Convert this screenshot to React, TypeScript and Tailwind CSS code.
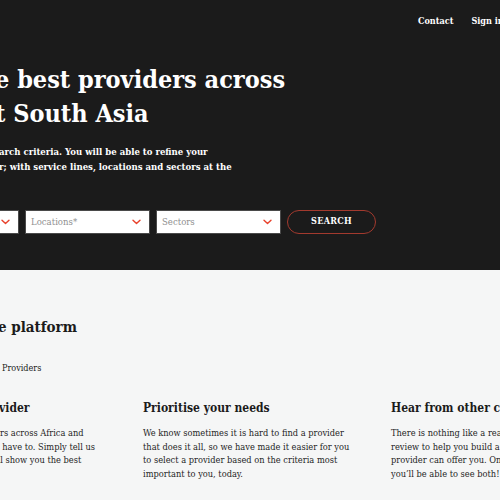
const SERIF = { fontFamily: '"DejaVu Serif Condensed", "DejaVu Serif", serif' };

function Chevron() {
  return (
    <svg width="9" height="6" viewBox="0 0 9 6" fill="none" className="shrink-0">
      <path d="M1 1.2 L4.5 4.6 L8 1.2" stroke="#e8422c" strokeWidth="1.4" strokeLinecap="round" strokeLinejoin="round" />
    </svg>
  );
}

function Select({ label, className }: { label: string; className?: string }) {
  return (
    <div
      className={`w-[125px] h-[24px] bg-white border border-[#4a4a4a] flex items-center justify-between pl-[5px] pr-[8px] text-[9.5px] text-[#8f8f8f] ${className ?? ''}`}
    >
      <span>{label}</span>
      <Chevron />
    </div>
  );
}

function Column({ title, lines, className }: { title: string; lines: string[]; className?: string }) {
  return (
    <div className={`w-[230px] shrink-0 ${className ?? ''}`}>
      <h3 className="text-[12px] font-bold leading-[18px] whitespace-nowrap text-[#1b1b1b]">{title}</h3>
      <div className="mt-[9px] text-[9.2px] leading-[13.7px] text-[#1e1e1e]">
        {lines.map((l, i) => (
          <div key={i} className="whitespace-nowrap">{l}</div>
        ))}
      </div>
    </div>
  );
}

export default function App() {
  return (
    <div className="w-[500px] h-[500px] overflow-hidden" style={SERIF}>
      <section className="bg-[#1b1b1b] h-[270px] text-white pt-[14px]">
        <nav className="flex pl-[418px] gap-[18px] whitespace-nowrap text-[9px] font-bold leading-[14px]">
          <span>Contact</span>
          <span>Sign in</span>
        </nav>
        <h1 className="mt-[35px] text-[25px] font-bold leading-[34px] whitespace-nowrap">
          <div className="-ml-[5px]">e best providers across</div>
          <div className="-ml-[5px]">t South Asia</div>
        </h1>
        <div className="mt-[13px] text-[9.5px] font-bold leading-[15px] whitespace-nowrap">
          <div className="-ml-[1px]">arch criteria. You will be able to refine your</div>
          <div className="-ml-[1px]">r; with service lines, locations and sectors at the</div>
        </div>
        <div className="mt-[36px] flex gap-[6px] items-center">
          <Select label="Services*" className="-ml-[106px]" />
          <Select label="Locations*" />
          <Select label="Sectors" />
          <button className="w-[89px] h-[24px] rounded-full border-[1.5px] border-[#a33a2e] text-white text-[9px] font-bold tracking-[0.3px]">
            SEARCH
          </button>
        </div>
      </section>
      <section className="bg-[#f5f6f6] h-[230px] text-[#1b1b1b] pt-[46px]">
        <h2 className="-ml-[2px] text-[15px] font-bold leading-[22px] whitespace-nowrap">e platform</h2>
        <div className="mt-[23px] text-[9px] leading-[14px] whitespace-nowrap pl-[2px]">
          <span>Providers</span>
        </div>
        <div className="mt-[24px] flex gap-[18px]">
          <Column
            className="-ml-[99px] -mr-[6px]"
            title="Search for a provider"
            lines={[
              'We list the best providers across Africa and',
              'South Asia so you don’t have to. Simply tell us',
              'what you need and we’ll show you the best',
            ]}
          />
          <Column
            title="Prioritise your needs"
            lines={[
              'We know sometimes it is hard to find a provider',
              'that does it all, so we have made it easier for you',
              'to select a provider based on the criteria most',
              'important to you, today.',
            ]}
          />
          <Column
            title="Hear from other clients"
            lines={[
              'There is nothing like a real client',
              'review to help you build a picture',
              'provider can offer you. On',
              'you’ll be able to see both!',
            ]}
          />
        </div>
      </section>
    </div>
  );
}
